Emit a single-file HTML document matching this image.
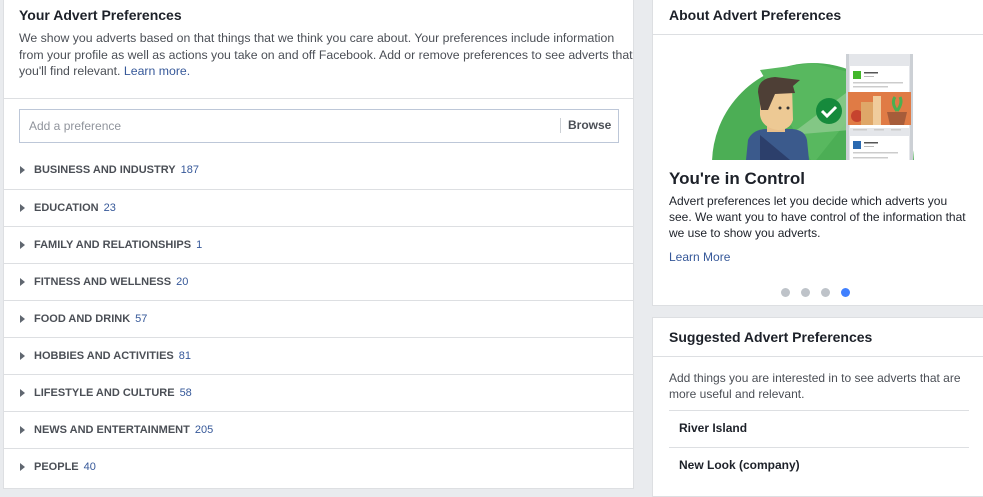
<!DOCTYPE html>
<html><head><meta charset="utf-8"><style>
*{margin:0;padding:0;box-sizing:border-box}
body{width:983px;height:484px;background:#e9ebee;position:relative;overflow:hidden;font-family:"Liberation Sans",Helvetica,Arial,sans-serif;color:#1d2129}
.abs{position:absolute}
.panel{position:absolute;background:#fff;border:1px solid #dddfe2}
.h{font-weight:bold;font-size:14px;color:#1d2129}
.t{font-size:12px;line-height:16.5px;color:#4b4f56}
.row{position:absolute;left:4px;width:629px;height:37px;border-top:1px solid #dddfe2}
.row .tri{position:absolute;left:16px;top:14px;width:0;height:0;border-left:5px solid #606770;border-top:4.5px solid transparent;border-bottom:4.5px solid transparent}
.row .lab{position:absolute;left:30px;top:12px;font-size:11px;font-weight:bold;color:#4b4f56}
.row .n{color:#365899;font-weight:normal;margin-left:5px}
.line{position:absolute;height:1px;background:#dddfe2}
a{color:#365899;text-decoration:none}
.dot{position:absolute;top:288px;width:9px;height:9px;border-radius:50%;background:#bec3c9}
.nw{white-space:nowrap}
</style></head><body>
<div class="panel" style="left:3px;top:-1px;width:631px;height:490px;border-top:none"></div>
<div class="abs h" style="left:19px;top:7px;font-size:14px">Your Advert Preferences</div>
<div class="abs t nw" style="left:19px;top:30px;font-size:12.3px">We show you adverts based on that things that we think you care about. Your preferences include information<br>from your profile as well as actions you take on and off Facebook. Add or remove preferences to see adverts that<br>you'll find relevant. <a>Learn more.</a></div>
<div class="line" style="left:4px;top:98px;width:629px"></div>
<div class="abs" style="left:19px;top:109px;width:600px;height:34px;border:1px solid #bdc7d8;background:#fff"></div>
<div class="abs" style="left:29px;top:119px;font-size:12px;color:#90949c">Add a preference</div>
<div class="abs" style="left:560px;top:118px;width:1px;height:15px;background:#ccd0d5"></div>
<div class="abs" style="left:568px;top:118px;font-size:12px;font-weight:bold;color:#4b4f56">Browse</div>

<div class="row" style="top:152px;border-top:none"><div class="tri"></div><div class="lab">BUSINESS AND INDUSTRY<span class="n">187</span></div></div>
<div class="row" style="top:189px"><div class="tri"></div><div class="lab">EDUCATION<span class="n">23</span></div></div>
<div class="row" style="top:226px"><div class="tri"></div><div class="lab">FAMILY AND RELATIONSHIPS<span class="n">1</span></div></div>
<div class="row" style="top:263px"><div class="tri"></div><div class="lab">FITNESS AND WELLNESS<span class="n">20</span></div></div>
<div class="row" style="top:300px"><div class="tri"></div><div class="lab">FOOD AND DRINK<span class="n">57</span></div></div>
<div class="row" style="top:337px"><div class="tri"></div><div class="lab">HOBBIES AND ACTIVITIES<span class="n">81</span></div></div>
<div class="row" style="top:374px"><div class="tri"></div><div class="lab">LIFESTYLE AND CULTURE<span class="n">58</span></div></div>
<div class="row" style="top:411px"><div class="tri"></div><div class="lab">NEWS AND ENTERTAINMENT<span class="n">205</span></div></div>
<div class="row" style="top:448px"><div class="tri"></div><div class="lab">PEOPLE<span class="n">40</span></div></div>

<div class="panel" style="left:652px;top:-1px;width:340px;height:307px;border-top:none"></div>
<div class="abs h" style="left:669px;top:7px">About Advert Preferences</div>
<div class="line" style="left:653px;top:34px;width:330px"></div>
<svg class="abs" style="left:700px;top:50px" width="220" height="115" viewBox="0 0 220 115">
<defs><clipPath id="c"><rect x="0" y="0" width="220" height="110"/></clipPath></defs>
<g clip-path="url(#c)">
<circle cx="113" cy="114" r="101" fill="#4cae55"/>
<path d="M113 114 L60 20 L113 13 L180 30 Z" fill="#58b85f"/>
<path d="M90 85 L150 40 L150 80 Z" fill="#8ecb8f" opacity=".8"/>
<circle cx="129" cy="61" r="13" fill="#168a3c"/>
<path d="M122 61 l5 5 l9 -9" stroke="#fff" stroke-width="3" fill="none"/>
<path d="M46 110 L48 90 Q52 80 65 79 L92 79 Q105 80 107 90 L109 110 Z" fill="#3b5a8c"/>
<path d="M60 85 L90 110 L60 110 Z" fill="#2c3f6b"/>
<rect x="67" y="68" width="18" height="14" fill="#e8c08c"/>
<path d="M60 45 Q60 35 75 35 L92 35 L93 70 Q90 80 78 80 Q62 78 60 65 Z" fill="#edc994"/>
<path d="M58 42 Q58 28 75 27 L100 30 L93 36 L95 43 L75 44 L68 60 L61 60 Z" fill="#4e3f36"/>
<circle cx="80" cy="58" r="1.5" fill="#333"/><circle cx="88" cy="58" r="1.5" fill="#333"/>
<rect x="146" y="4" width="67" height="110" fill="#e4e6ea"/>
<rect x="146" y="4" width="3" height="110" fill="#ccd0d5"/><rect x="210" y="4" width="3" height="110" fill="#ccd0d5"/>
<rect x="150" y="16" width="59" height="62" fill="#fff"/>
<rect x="153" y="21" width="8" height="8" fill="#42b72a"/>
<rect x="164" y="22" width="14" height="1.5" fill="#555"/><rect x="164" y="26" width="10" height="1" fill="#bbb"/>
<rect x="153" y="32" width="50" height="1.5" fill="#ccc"/><rect x="153" y="36" width="35" height="1.5" fill="#ccc"/>
<rect x="148" y="42" width="63" height="33" fill="#e07b45"/>
<circle cx="157" cy="66" r="6" fill="#c6432e"/>
<rect x="161" y="52" width="12" height="23" fill="#dfa768"/>
<rect x="173" y="46" width="8" height="29" fill="#f0cc9c"/>
<path d="M187 62 L207 62 L204 75 L190 75 Z" fill="#a65c3a"/>
<path d="M197 61 q-6 -8 -2 -14 M197 61 q6 -8 3 -14" stroke="#4caf50" stroke-width="3" fill="none"/>
<rect x="153" y="79" width="14" height="1.5" fill="#ccc"/><rect x="174" y="79" width="10" height="1.5" fill="#ccc"/><rect x="191" y="79" width="10" height="1.5" fill="#ccc"/>
<rect x="150" y="86" width="59" height="30" fill="#fff"/>
<rect x="153" y="91" width="8" height="8" fill="#2a69b0"/>
<rect x="164" y="92" width="14" height="1.5" fill="#555"/><rect x="164" y="96" width="10" height="1" fill="#bbb"/>
<rect x="153" y="102" width="45" height="1.5" fill="#ccc"/><rect x="153" y="107" width="35" height="1.5" fill="#ccc"/>
</g>
</svg>
<div class="abs" style="left:669px;top:169px;font-size:17px;font-weight:bold;color:#1d2129">You're in Control</div>
<div class="abs nw" style="left:669px;top:193px;font-size:12px;line-height:16px;color:#1d2129">Advert preferences let you decide which adverts you<br>see. We want you to have control of the information that<br>we use to show you adverts.</div>
<div class="abs" style="left:669px;top:250px;font-size:12px"><a>Learn More</a></div>
<div class="dot" style="left:781px"></div><div class="dot" style="left:801px"></div><div class="dot" style="left:821px"></div><div class="dot" style="left:841px;background:#4080ff"></div>

<div class="panel" style="left:652px;top:317px;width:340px;height:180px"></div>
<div class="abs h" style="left:669px;top:329px">Suggested Advert Preferences</div>
<div class="line" style="left:653px;top:356px;width:330px"></div>
<div class="abs t nw" style="left:669px;top:370px;line-height:16px;color:#4b4f56">Add things you are interested in to see adverts that are<br>more useful and relevant.</div>
<div class="line" style="left:669px;top:410px;width:300px"></div>
<div class="abs" style="left:679px;top:421px;font-size:12px;font-weight:bold">River Island</div>
<div class="line" style="left:669px;top:447px;width:300px"></div>
<div class="abs" style="left:679px;top:458px;font-size:12px;font-weight:bold">New Look (company)</div>
</body></html>
